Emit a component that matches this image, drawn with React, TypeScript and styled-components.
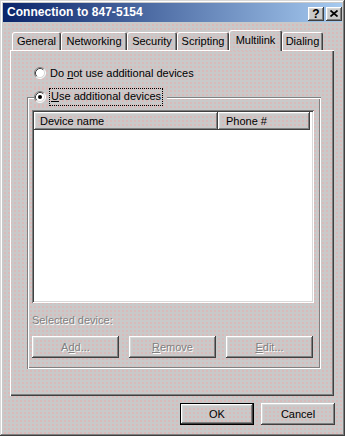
import React from "react";
import styled, { createGlobalStyle, css } from "styled-components";

const GlobalStyle = createGlobalStyle`
  html, body {
    margin: 0;
    padding: 0;
    background: #c8c8c8;
  }
  * {
    box-sizing: border-box;
  }
`;

const dither = css`
  background-color: #c9c9c9;
  background-image: radial-gradient(
    circle at 1px 1px,
    rgba(236, 168, 168, 0.45) 0.7px,
    transparent 1.2px
  );
  background-size: 4px 4px;
`;

const raised = css`
  box-shadow: inset -1px -1px #404040, inset 1px 1px #ffffff,
    inset -2px -2px #808080, inset 2px 2px #d8d8d8;
`;

const tabs = [
  { label: "General", width: 49 },
  { label: "Networking", width: 66 },
  { label: "Security", width: 50 },
  { label: "Scripting", width: 52 },
  { label: "Multilink", width: 53, active: true },
  { label: "Dialing", width: 41 },
];

const Radio = ({ checked }: { checked?: boolean }) => (
  <RadioBox width="12" height="12" viewBox="0 0 12 12">
    <circle cx="6" cy="6" r="5" fill="#ffffff" />
    <path d="M2.11 9.89 A5.5 5.5 0 0 1 9.89 2.11" fill="none" stroke="#808080" />
    <path d="M9.89 2.11 A5.5 5.5 0 0 1 2.11 9.89" fill="none" stroke="#ffffff" />
    <path d="M2.82 9.18 A4.5 4.5 0 0 1 9.18 2.82" fill="none" stroke="#404040" />
    <path d="M9.18 2.82 A4.5 4.5 0 0 1 2.82 9.18" fill="none" stroke="#d8d8d8" />
    {checked && <circle cx="6" cy="6" r="2" fill="#000000" />}
  </RadioBox>
);

const App = () => {
  return (
    <>
      <GlobalStyle />
      <Window>
        <TitleBar>
          <Title>Connection to 847-5154</Title>
          <CaptionButtons>
            <CaptionButton>?</CaptionButton>
            <CaptionButton>
              <svg width="8" height="7" viewBox="0 0 8 7">
                <path d="M0.5 0.5 L7.5 6.5 M7.5 0.5 L0.5 6.5" stroke="#000" strokeWidth="1.7" />
              </svg>
            </CaptionButton>
          </CaptionButtons>
        </TitleBar>

        <Body>
          <TabStrip>
            {tabs.map((t) => (
              <Tab key={t.label} $width={t.width} $active={!!t.active}>
                {t.label}
              </Tab>
            ))}
          </TabStrip>

          <Panel>
            <RadioRow>
              <Radio />
              <RadioLabel>
                Do <u>n</u>ot use additional devices
              </RadioLabel>
            </RadioRow>

            <Group>
              <Legend>
                <Radio checked />
                <FocusLabel>
                  <u>U</u>se additional devices
                </FocusLabel>
              </Legend>

              <ListView>
                <ListHeader>
                  <HeaderCell $width={184}>Device name</HeaderCell>
                  <HeaderCell $width={92} $pad={8}>
                    Phone #
                  </HeaderCell>
                </ListHeader>
              </ListView>

              <DisabledText>Selected device:</DisabledText>

              <ButtonRow>
                <Button disabled $width={87}>
                  A<u>d</u>d...
                </Button>
                <Button disabled $width={87}>
                  <u>R</u>emove
                </Button>
                <Button disabled $width={87}>
                  <u>E</u>dit...
                </Button>
              </ButtonRow>
            </Group>
          </Panel>

          <Footer>
            <Button $width={74} $default>
              OK
            </Button>
            <Button $width={74}>Cancel</Button>
          </Footer>
        </Body>
      </Window>
    </>
  );
};

export default App;

const Window = styled.div`
  width: 345px;
  height: 436px;
  padding: 3px;
  display: flex;
  flex-direction: column;
  font-family: "Liberation Sans", Arial, sans-serif;
  font-size: 11px;
  color: #000;
  ${dither};
  box-shadow: inset -1px -1px #404040, inset 1px 1px #d8d8d8,
    inset -2px -2px #808080, inset 2px 2px #ffffff;
`;

const TitleBar = styled.div`
  height: 19px;
  display: flex;
  align-items: flex-end;
  justify-content: space-between;
  padding: 0 0 1px 4px;
  background: linear-gradient(to right, #0a246a, #a6caf0);
`;

const Title = styled.div`
  align-self: center;
  color: #ffffff;
  font-weight: bold;
  font-size: 12px;
  letter-spacing: 0.05px;
  white-space: nowrap;
`;

const CaptionButtons = styled.div`
  display: flex;
  gap: 2px;
`;

const CaptionButton = styled.div`
  width: 16px;
  height: 14px;
  display: flex;
  align-items: center;
  justify-content: center;
  background: #c9c9c9;
  ${raised};
  font-weight: bold;
  font-size: 12px;
  line-height: 14px;
  padding-bottom: 1px;
`;

const Body = styled.div`
  flex: 1;
  display: flex;
  flex-direction: column;
  padding: 8px 8px 8px 7px;
`;

const TabStrip = styled.div`
  display: flex;
  align-items: flex-end;
  padding-left: 2px;
  height: 20px;
  position: relative;
  z-index: 1;
`;

const Tab = styled.div<{ $width: number; $active: boolean }>`
  width: ${({ $width }) => $width}px;
  height: ${({ $active }) => ($active ? 21 : 18)}px;
  margin-bottom: ${({ $active }) => ($active ? -1 : 0)}px;
  display: flex;
  align-items: center;
  justify-content: center;
  padding-bottom: ${({ $active }) => ($active ? 2 : 0)}px;
  ${dither};
  border-top-left-radius: 2px;
  border-top-right-radius: 2px;
  box-shadow: inset 1px 1px #ffffff, inset -1px 0 #404040, inset -2px 0 #808080;
  white-space: nowrap;
`;

const Panel = styled.div`
  height: 346px;
  display: flex;
  flex-direction: column;
  padding: 17px 13px 0 17px;
  ${dither};
  box-shadow: inset 1px 1px #ffffff, inset -1px -1px #404040,
    inset -2px -2px #808080;
`;

const RadioRow = styled.div`
  display: flex;
  align-items: center;
  gap: 4px;
  padding-left: 7px;
  height: 12px;
`;

const RadioBox = styled.svg`
  flex-shrink: 0;
  display: block;
`;

const RadioLabel = styled.span`
  white-space: nowrap;
  line-height: 13px;
`;

const Group = styled.div`
  position: relative;
  margin-top: 18px;
  height: 272px;
  display: flex;
  flex-direction: column;
  padding: 13px 7px 0 5px;
  box-shadow: inset 1px 1px #808080, inset 2px 2px #ffffff,
    inset -1px -1px #ffffff, inset -2px -2px #808080;
`;

const Legend = styled.div`
  position: absolute;
  top: -9px;
  left: 7px;
  display: flex;
  align-items: center;
  gap: 3px;
  padding-right: 4px;
  ${dither};
`;

const FocusLabel = styled.span`
  border: 1px dotted #000;
  padding: 1px 1px 2px;
  line-height: 13px;
  white-space: nowrap;
`;

const ListView = styled.div`
  height: 193px;
  padding: 2px;
  background: #ffffff;
  box-shadow: inset 1px 1px #808080, inset -1px -1px #ffffff,
    inset 2px 2px #404040, inset -2px -2px #d8d8d8;
`;

const ListHeader = styled.div`
  display: flex;
  height: 18px;
`;

const HeaderCell = styled.div<{ $width: number; $pad?: number }>`
  width: ${({ $width }) => $width}px;
  display: flex;
  align-items: center;
  padding-left: ${({ $pad }) => $pad ?? 6}px;
  ${dither};
  ${raised};
`;

const DisabledText = styled.div`
  margin-top: 11px;
  line-height: 13px;
  color: #808080;
  text-shadow: 1px 1px #ffffff;
`;

const ButtonRow = styled.div`
  display: flex;
  justify-content: space-between;
  margin-top: 9px;
  padding-right: 1px;
`;

const Button = styled.button<{ $width: number; $default?: boolean }>`
  width: ${({ $width }) => $width}px;
  height: 22px;
  padding: 0;
  border: ${({ $default }) => ($default ? "1px solid #000" : "none")};
  font-family: "Liberation Sans", Arial, sans-serif;
  font-size: 11px;
  color: #000;
  ${dither};
  ${raised};

  &:disabled {
    color: #808080;
    text-shadow: 1px 1px #ffffff;
  }
`;

const Footer = styled.div`
  display: flex;
  justify-content: flex-end;
  gap: 7px;
  margin-top: 7px;
  margin-right: -1px;
`;
